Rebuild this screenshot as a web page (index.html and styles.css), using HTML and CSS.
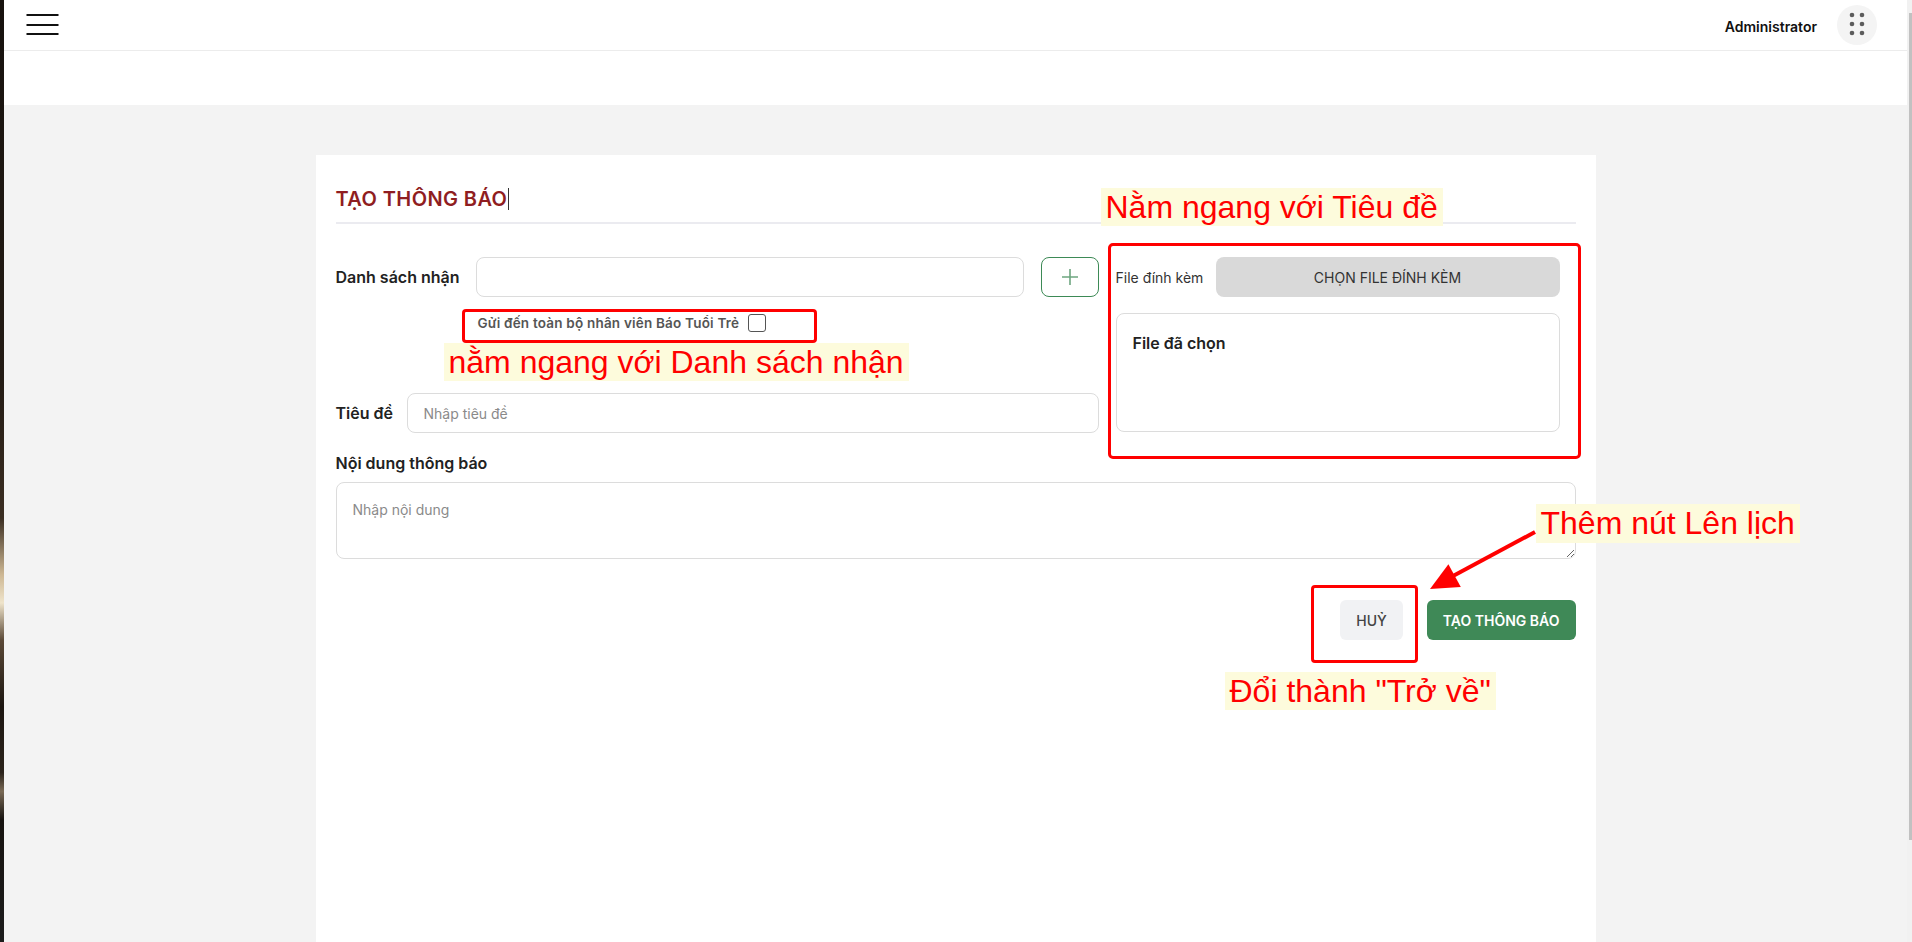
FILE: index.html
```html
<!DOCTYPE html>
<html lang="vi">
<head>
<meta charset="utf-8">
<title>Tạo thông báo</title>
<link rel="stylesheet" href="styles.css">
</head>
<body>
<div class="edge"></div>
<div class="app">
  <header class="topbar">
    <button class="menu-btn" aria-label="Menu">
      <svg width="33" height="24" viewBox="0 0 33 24"><path d="M0.5 2h32M0.5 12h32M0.5 21h32" stroke="#111" stroke-width="2.2" fill="none"/></svg>
    </button>
    <div class="user">
      <span class="user-name">Administrator</span>
      <span class="apps">
        <svg width="40" height="40" viewBox="0 0 40 40"><g fill="#5c5c5c"><circle cx="15" cy="10" r="2.3"/><circle cx="25" cy="10" r="2.3"/><circle cx="15" cy="19" r="2.3"/><circle cx="25" cy="19" r="2.3"/><circle cx="15" cy="28" r="2.3"/><circle cx="25" cy="28" r="2.3"/></g></svg>
      </span>
    </div>
  </header>
  <div class="subbar"></div>
  <main class="content">
    <section class="card">
      <h1 class="card-title">TẠO THÔNG BÁO<span class="caret"></span></h1>
      <div class="form-grid">
        <div class="col-left">
          <div class="row">
            <label class="label label-recipients">Danh sách nhận</label>
            <input class="field field-recipients" type="text">
            <button class="btn-add" aria-label="Thêm">
              <svg width="18" height="18" viewBox="0 0 18 18"><path d="M9 1v16M1 9h16" stroke="#6ea680" stroke-width="1.6" fill="none"/></svg>
            </button>
          </div>
          <label class="check-row">Gửi đến toàn bộ nhân viên Báo Tuổi Trẻ <input type="checkbox" class="check"></label>
          <div class="row row-title">
            <label class="label label-title">Tiêu đề</label>
            <input class="field field-title" type="text" placeholder="Nhập tiêu đề">
          </div>
        </div>
        <div class="col-right">
          <div class="attach-row">
            <span class="attach-label">File đính kèm</span>
            <button class="btn-attach">CHỌN FILE ĐÍNH KÈM</button>
          </div>
          <div class="files-box"><div class="files-title">File đã chọn</div></div>
        </div>
      </div>
      <label class="label label-block">Nội dung thông báo</label>
      <textarea class="field field-content" placeholder="Nhập nội dung"></textarea>
      <div class="actions">
        <button class="btn btn-cancel">HUỶ</button>
        <button class="btn btn-primary">TẠO THÔNG BÁO</button>
      </div>

      <div class="note note-title">Nằm ngang với Tiêu đề</div>
      <div class="mark mark-attach"></div>
      <div class="mark mark-check"></div>
      <div class="note note-check">nằm ngang với Danh sách nhận</div>
      <div class="note note-schedule">Thêm nút Lên lịch</div>
      <svg class="arrow" width="125" height="80" viewBox="0 0 125 80">
        <path d="M115 12 L33 56" stroke="#ff0000" stroke-width="4" fill="none"/>
        <polygon points="10,69 28.4,44.2 40.8,67" fill="#ff0000"/>
      </svg>
      <div class="mark mark-cancel"></div>
      <div class="note note-back">Đổi thành "Trở về"</div>
    </section>
  </main>
</div>
<div class="scrollbar"><div class="scroll-thumb"></div></div>
</body>
</html>
```
FILE: styles.css
```css
* { box-sizing: border-box; }

body {
  margin: 0;
  height: 100vh;
  display: flex;
  overflow: hidden;
  font-family: Inter, "Liberation Sans", sans-serif;
  color: #222;
}

.edge {
  width: 4px;
  flex: none;
  background: linear-gradient(180deg, #17120e 0%, #231b14 40%, #3b2e22 55%, #cdb793 61%, #efe4cb 64%, #5a4836 68%, #1c1611 75%, #2b231b 82%, #7a6a56 84%, #171310 87%, #1c1c1c 100%);
}

.app {
  flex: 1;
  min-width: 0;
  display: flex;
  flex-direction: column;
  background: #f3f3f3;
}

.topbar {
  height: 51px;
  flex: none;
  background: #fff;
  border-bottom: 1px solid #ececec;
  display: flex;
  align-items: center;
  justify-content: space-between;
  padding: 0 30px 0 22px;
}

.menu-btn {
  border: 0;
  background: none;
  padding: 0;
  display: flex;
  margin-top: -1px;
}

.user {
  display: flex;
  align-items: center;
  gap: 20px;
}

.user-name {
  font-size: 14px;
  font-weight: 600;
  color: #111;
  margin-top: 3px;
}

.apps {
  width: 40px;
  height: 40px;
  border-radius: 50%;
  background: #f4f4f4;
  display: flex;
}

.subbar {
  height: 54px;
  flex: none;
  background: #fff;
}

.content {
  flex: 1;
  padding-top: 50px;
}

.card {
  position: relative;
  width: 1280px;
  min-height: 820px;
  margin: 0 auto;
  background: #fff;
  padding: 32px 20px 0;
}

.card-title {
  margin: 0;
  font-size: 20px;
  letter-spacing: 0.4px;
  line-height: 24px;
  font-weight: 600;
  color: #8f1d21;
  padding-bottom: 11px;
  border-bottom: 2px solid #ebebf0;
  display: flex;
  align-items: center;
}

.caret {
  width: 1px;
  height: 22px;
  background: #333;
  margin-left: 1px;
}

.form-grid {
  display: grid;
  grid-template-columns: 763px 444px;
  column-gap: 17px;
  margin-top: 33px;
}

.row {
  display: flex;
  align-items: center;
  height: 40px;
}

.label {
  font-size: 16px;
  line-height: 24px;
  font-weight: 600;
  color: #222;
}

.label-recipients { width: 140px; flex: none; }
.label-title { width: 71px; flex: none; }

.field {
  height: 40px;
  border: 1px solid #dcdcdc;
  border-radius: 8px;
  background: #fff;
  font-family: Inter, "Liberation Sans", sans-serif;
  font-size: 14px;
  color: #222;
  padding: 0 16px;
  outline: none;
}

.field::placeholder { color: #8a8a8a; }

.field-recipients { width: 548px; }
.field-title { width: 692px; }

.btn-add {
  width: 58px;
  height: 40px;
  margin-left: 17px;
  border: 1px solid #3d8a56;
  border-radius: 8px;
  background: #fff;
  display: flex;
  align-items: center;
  justify-content: center;
  padding: 0;
}

.check-row {
  display: flex;
  align-items: center;
  gap: 9px;
  height: 28px;
  margin: 12px 0 0 142px;
  font-size: 13.5px;
  letter-spacing: 0.2px;
  font-weight: 600;
  color: #555;
}

.check {
  appearance: none;
  -webkit-appearance: none;
  width: 18px;
  height: 18px;
  margin: 0;
  border: 1px solid #555;
  border-radius: 3px;
  background: #fff;
}

.row-title { margin-top: 56px; }

.attach-row {
  display: flex;
  align-items: center;
  height: 40px;
}

.attach-label {
  width: 100px;
  flex: none;
  font-size: 14px;
  color: #333;
}

.btn-attach {
  flex: 1;
  height: 40px;
  border: 0;
  border-radius: 8px;
  background: #d9d9d9;
  font-family: Inter, "Liberation Sans", sans-serif;
  font-size: 14px;
  color: #333;
}

.files-box {
  margin-top: 16px;
  height: 119px;
  border: 1px solid #dcdcdc;
  border-radius: 8px;
  padding: 17px 16px;
}

.files-title {
  font-size: 16px;
  line-height: 24px;
  font-weight: 600;
  color: #222;
}

.label-block {
  display: block;
  margin-top: 18px;
}

.field-content {
  display: block;
  width: 100%;
  height: 77px;
  margin-top: 7px;
  padding: 17px 16px;
  line-height: 20px;
  resize: vertical;
}

.actions {
  display: flex;
  justify-content: flex-end;
  gap: 24px;
  margin-top: 41px;
}

.btn {
  height: 40px;
  border: 0;
  border-radius: 6px;
  font-family: Inter, "Liberation Sans", sans-serif;
  font-size: 14px;
}

.btn-cancel {
  background: #f1f2f4;
  color: #444;
  font-weight: 500;
  padding: 0 16px;
}

.btn-primary {
  background: #3f8957;
  color: #fff;
  font-weight: 600;
  padding: 0 16px;
}

/* review annotations drawn over the screenshot */
.note {
  position: absolute;
  font-family: "Liberation Sans", Arial, sans-serif;
  font-size: 32px;
  line-height: 38px;
  color: #ff0000;
  background: #fdfbdc;
  padding: 0 5px;
  white-space: nowrap;
}

.note-title { left: 785px; top: 33px; }
.note-check { left: 128px; top: 188px; }
.note-schedule { left: 1220px; top: 349px; line-height: 39px; }
.note-back { left: 909px; top: 517px; }

.mark {
  position: absolute;
  border: 3px solid #ff0000;
  border-radius: 4px;
}

.mark-check { left: 146px; top: 154px; width: 355px; height: 34px; }
.mark-attach { left: 792px; top: 88px; width: 473px; height: 216px; border-radius: 5px; }
.mark-cancel { left: 995px; top: 430px; width: 107px; height: 78px; }

.arrow {
  position: absolute;
  left: 1104px;
  top: 365px;
}

.scrollbar {
  width: 5px;
  flex: none;
  background: #f1f1f1;
  padding-top: 13px;
  padding-left: 2px;
}

.scroll-thumb {
  width: 3px;
  height: 827px;
  background: #c1c1c1;
}
```
